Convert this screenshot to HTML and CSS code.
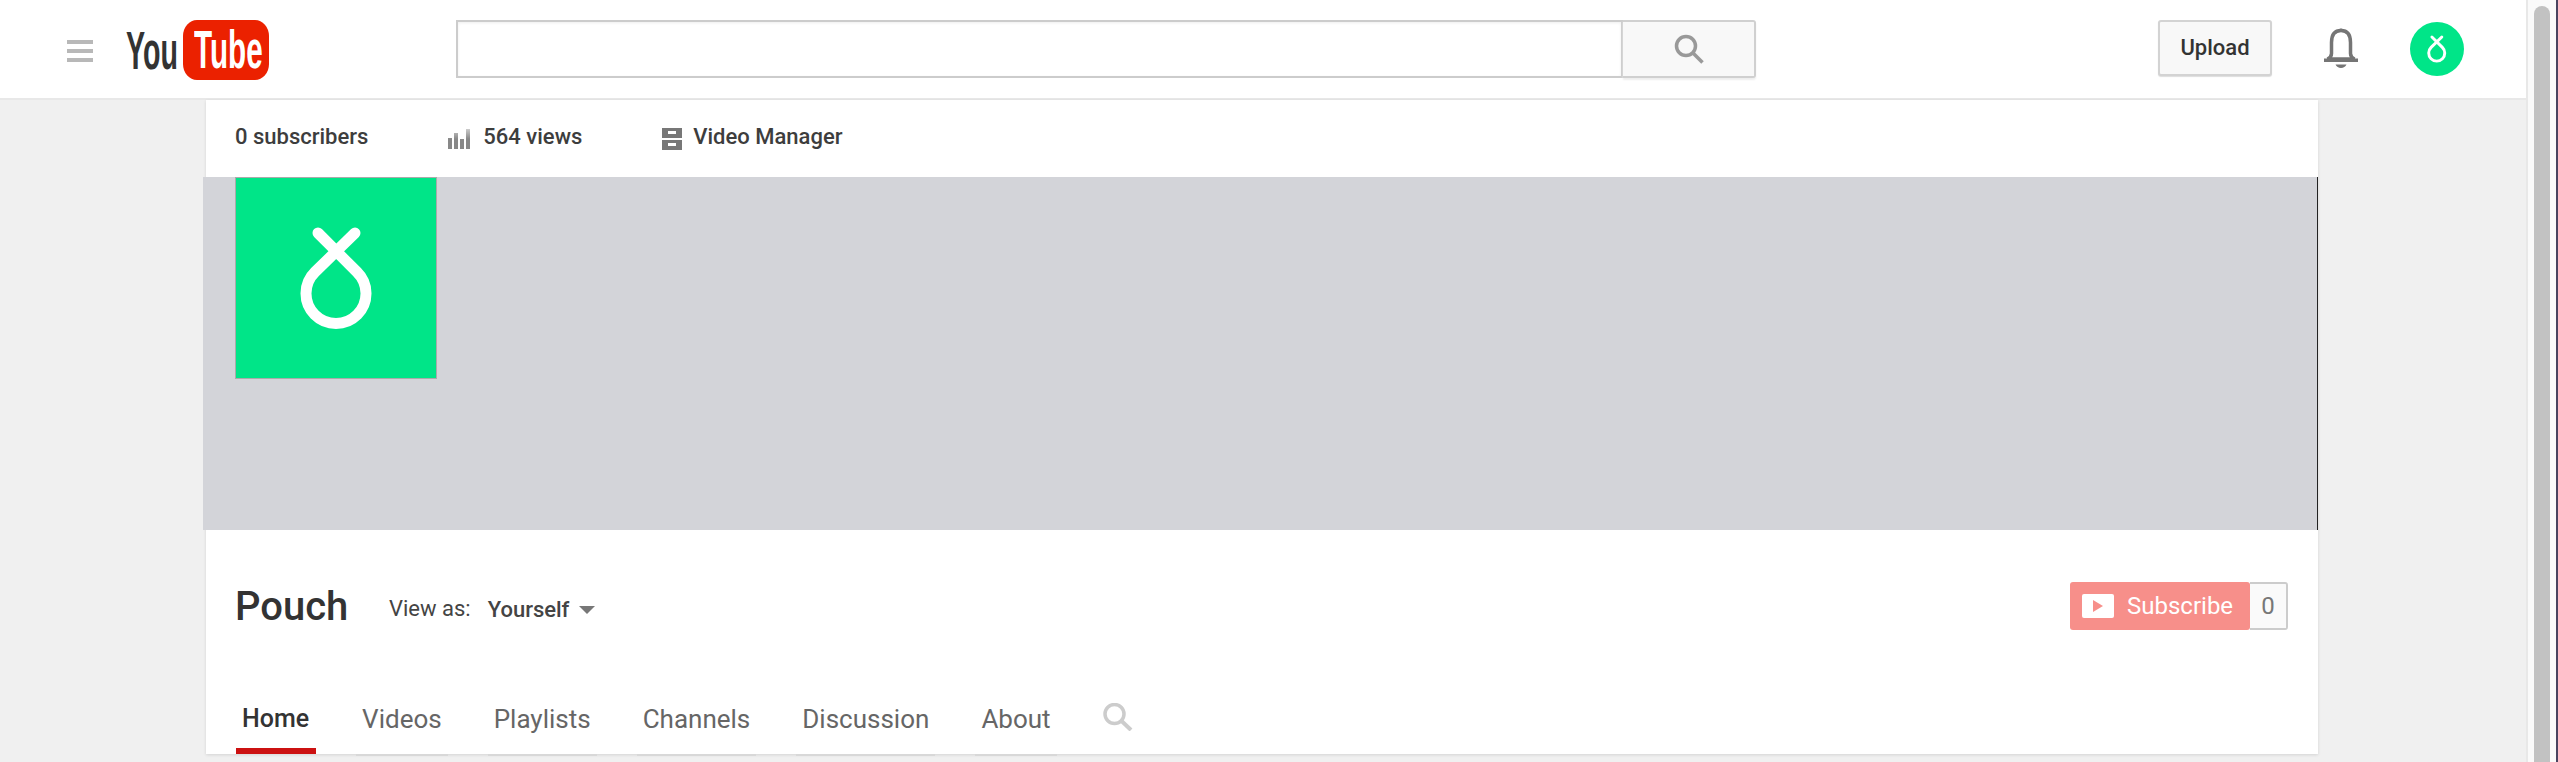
FILE: index.html
```html
<!DOCTYPE html>
<html lang="en">
<head>
    <meta charset="UTF-8">
    <title>Pouch - YouTube</title>
    <link rel="stylesheet" href="styles.css">
</head>
<body>
    <div class="page">
        <header class="masthead">
            <div class="menu-icon"><span></span><span></span><span></span></div>
            <div class="logo">
                <span class="logo-you">You</span>
                <span class="logo-box"><span class="logo-tube">Tube</span></span>
            </div>
            <div class="search">
                <div class="search-input"></div>
                <div class="search-btn">
                    <svg width="30" height="30" viewBox="0 0 30 30"><circle cx="12" cy="12" r="9.500" fill="none" stroke="#999" stroke-width="3.500"/><path d="M18 18l10.500 10.500" stroke="#999" stroke-width="3.500" fill="none"/></svg>
                </div>
            </div>
            <div class="masthead-right">
                <div class="upload-btn">Upload</div>
                <svg class="bell" width="34" height="40" viewBox="0 0 34 40">
                    <path d="M17 2.500c-7 0-9.500 5-9.500 12v11c0 2-1 4-4 5.500h27c-3-1.500-4-3.500-4-5.500v-11c0-7-2.500-12-9.500-12z" fill="none" stroke="#757575" stroke-width="3.500"/>
                    <path d="M0 30.500h34v3.500h-34zM11.500 36.500h11c-1 2.300-3 3.500-5.500 3.500s-4.500-1.200-5.500-3.500zM14 3.500c0-4 6-4 6 0z" fill="#757575"/>
                </svg>
                <div class="avatar-small">
                    <svg width="54" height="54" viewBox="0 0 202 202"><path class="pouch-mark" d="M82 56L121 95A30 30 0 1 1 79 95L119 56"/></svg>
                </div>
            </div>
        </header>

        <main class="channel">
            <div class="stats-bar">
                <span class="stat">0 subscribers</span>
                <span class="stat stat-views">
                    <svg width="22" height="20" viewBox="0 0 22 20"><defs><linearGradient id="fade" x1="0" y1="0" x2="0" y2="1"><stop offset="0" stop-color="#ccc"/><stop offset="0.5" stop-color="#888"/></linearGradient></defs><path d="M0 9h4v11h-4zM6 4h4v16h-4zM12 10h4v10h-4zM18 0h4v20h-4z" fill="url(#fade)"/></svg>
                    564 views
                </span>
                <span class="stat stat-manager">
                    <svg width="20" height="22" viewBox="0 0 20 22"><path fill-rule="evenodd" d="M0 0h20v10h-20zM6 3v3h8v-3zM0 12h20v10h-20zM6 15v3h8v-3z" fill="#777"/></svg>
                    Video Manager
                </span>
            </div>

            <div class="banner">
                <div class="avatar-large">
                    <svg width="200" height="200" viewBox="0 1 200 200"><path class="pouch-mark" d="M82 56L121 95A30 30 0 1 1 79 95L119 56"/></svg>
                </div>
            </div>

            <div class="title-row">
                <h1>Pouch</h1>
                <span class="view-as">View as:</span>
                <span class="view-select">Yourself</span>
                <span class="caret"></span>
                <div class="subscribe">
                    <div class="subscribe-btn">
                        <span class="play-box"><span class="play-arrow"></span></span>
                        Subscribe
                    </div>
                    <div class="subscribe-count">0</div>
                </div>
            </div>

            <nav class="tabs">
                <a class="tab active">Home</a>
                <a class="tab">Videos</a>
                <a class="tab">Playlists</a>
                <a class="tab">Channels</a>
                <a class="tab">Discussion</a>
                <a class="tab">About</a>
                <svg class="tab-search" width="30" height="28" viewBox="0 0 30 28"><circle cx="11.500" cy="11" r="9.500" fill="none" stroke="#ccc" stroke-width="3.500"/><path d="M18 17.500l10 9.500" stroke="#ccc" stroke-width="4" fill="none"/></svg>
            </nav>
        </main>
    </div>

    <div class="scrollbar"><div class="scroll-thumb"></div></div>
</body>
</html>
```

FILE: styles.css
```css
* {
    margin: 0;
    padding: 0;
    box-sizing: border-box;
}

html, body {
    height: 762px;
    overflow: hidden;
}

body {
    display: flex;
    font-family: Roboto, 'Liberation Sans', sans-serif;
    background: #f0f0f0;
    color: #333;
}

.page {
    width: 2526px;
    flex-shrink: 0;
}

/* top bar */
.masthead {
    height: 100px;
    background: white;
    border-bottom: 2px solid #e8e8e8;
    display: flex;
    align-items: flex-start;
    padding-left: 67px;
}

.menu-icon {
    width: 26px;
    margin-top: 40px;
    display: flex;
    flex-direction: column;
    gap: 5px;
}

.menu-icon span {
    height: 4px;
    background: #b8b8b8;
}

.logo {
    display: flex;
    margin-left: 33px;
    margin-top: 20px;
}

.logo-you {
    width: 57px;
    margin-top: 1px;
    font-family: 'Liberation Sans', sans-serif;
    font-weight: bold;
    font-size: 53px;
    line-height: 60px;
    color: #333;
    transform: scaleX(0.54);
    transform-origin: left center;
}

.logo-box {
    width: 86px;
    height: 60px;
    background: #eb2100;
    border-radius: 14px / 16px;
    padding-left: 11px;
}

.logo-tube {
    display: block;
    font-family: 'Liberation Sans', sans-serif;
    font-weight: bold;
    font-size: 53px;
    line-height: 60px;
    color: white;
    transform: scaleX(0.56);
    transform-origin: left center;
}

.search {
    display: flex;
    margin-left: 187px;
    margin-top: 20px;
    height: 58px;
}

.search-input {
    width: 1167px;
    border: 2px solid #ccc;
    background: white;
    box-shadow: inset 0 1px 3px #eee;
}

.search-btn {
    width: 133px;
    background: #f8f8f8;
    border: 2px solid #d0d0d0;
    border-left: none;
    border-radius: 0 3px 3px 0;
    box-shadow: 0 2px 2px #eee;
    display: flex;
    align-items: center;
    justify-content: center;
}

.masthead-right {
    display: flex;
    align-items: flex-start;
    margin-left: 402px;
    margin-top: 20px;
}

.upload-btn {
    width: 114px;
    height: 56px;
    background: #f8f8f8;
    border: 2px solid #d3d3d3;
    border-radius: 3px;
    box-shadow: 0 1px 1px #ddd;
    font-size: 22px;
    font-weight: 500;
    color: #333;
    text-align: center;
    line-height: 52px;
}

.bell {
    margin-left: 52px;
    margin-top: 8px;
}

.avatar-small {
    width: 54px;
    height: 54px;
    margin-left: 52px;
    margin-top: 2px;
    border-radius: 50%;
    background: #00e588;
}

.pouch-mark {
    fill: none;
    stroke: white;
    stroke-width: 11;
    stroke-linecap: round;
}

/* channel card */
.channel {
    width: 2112px;
    height: 654px;
    margin-left: 206px;
    background: white;
    box-shadow: 0 1px 3px rgba(0, 0, 0, 0.12);
}

.stats-bar {
    height: 77px;
    display: flex;
    align-items: center;
    padding-left: 29px;
    padding-bottom: 4px;
}

.stat {
    font-size: 22px;
    font-weight: 500;
    color: #3d3d3d;
    display: flex;
    align-items: center;
}

.stat svg {
    margin-top: 4px;
}

.stat-views {
    margin-left: 80px;
    gap: 13px;
}

.stat-manager {
    margin-left: 80px;
    gap: 11px;
}

.banner {
    height: 353px;
    margin-left: -3px;
    background: #d3d4d9;
    border-right: 1px solid #222;
    padding-left: 32px;
}

.avatar-large {
    width: 202px;
    height: 202px;
    background: #00e588;
    border: 1px solid #aaa;
}

.avatar-large svg {
    display: block;
}

.title-row {
    height: 104px;
    display: flex;
    align-items: flex-start;
    padding-left: 29px;
    padding-top: 52px;
}

h1 {
    margin-top: 1px;
    font-size: 40px;
    font-weight: 500;
    color: #333;
    width: 110px;
}

.view-as {
    margin-left: 44px;
    margin-top: 14px;
    font-size: 22px;
    color: #444;
}

.view-select {
    margin-left: 17px;
    margin-top: 15px;
    font-size: 22px;
    font-weight: 500;
    color: #444;
}

.caret {
    margin-left: 10px;
    margin-top: 24px;
    border-left: 8px solid transparent;
    border-right: 8px solid transparent;
    border-top: 8px solid #777;
}

.subscribe {
    display: flex;
    height: 48px;
    margin-left: auto;
    margin-right: 30px;
}

.subscribe-btn {
    width: 180px;
    background: #f78f8a;
    border-radius: 3px;
    color: white;
    font-size: 24px;
    display: flex;
    align-items: center;
    padding-left: 12px;
    gap: 13px;
}

.play-box {
    width: 32px;
    height: 24px;
    background: white;
    border-radius: 2px;
    display: flex;
    align-items: center;
    justify-content: center;
}

.play-arrow {
    border-left: 10px solid #f78f8a;
    border-top: 6px solid transparent;
    border-bottom: 6px solid transparent;
}

.subscribe-count {
    width: 38px;
    background: #fafafa;
    border: 2px solid #ccc;
    border-left: none;
    border-radius: 0 3px 3px 0;
    color: #777;
    font-size: 24px;
    text-align: center;
    line-height: 44px;
}

.tabs {
    height: 120px;
    display: flex;
    gap: 40px;
    align-items: flex-end;
    padding-left: 30px;
}

.tab {
    padding: 0 6px;
    height: 50px;
    font-size: 26px;
    line-height: 30px;
    color: #666;
    box-shadow: 0 2px 0 #d8d8d8;
}

.tab.active {
    padding: 0 7px 0 6px;
    color: #333;
    font-size: 25px;
    font-weight: 500;
    border-bottom: 6px solid #cc1111;
    box-shadow: none;
}

.tab-search {
    align-self: flex-start;
    margin-left: 6px;
    margin-top: 69px;
}

/* fake browser scrollbar */
.scrollbar {
    flex: 1;
    height: 762px;
    background: #fafafa;
    border-left: 2px solid #e8e8e8;
    border-right: 2px solid #4a4460;
    padding: 6px 6px 0;
}

.scroll-thumb {
    width: 16px;
    height: 756px;
    background: #c2c2c2;
    border-radius: 8px 8px 0 0;
}
```
